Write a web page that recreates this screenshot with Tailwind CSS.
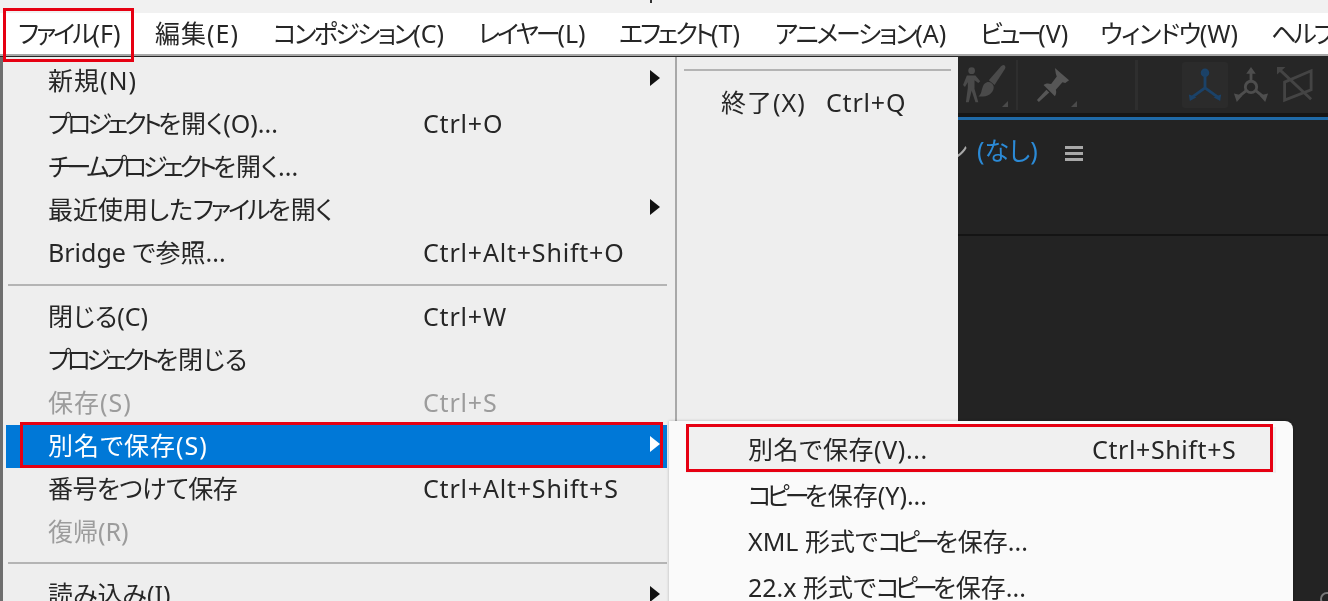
<!DOCTYPE html>
<html lang="ja">

<head>
    <meta charset="utf-8">
    <title>File menu</title>
    <script src="https://cdn.jsdelivr.net/npm/@tailwindcss/browser@4"></script>
</head>

<body class="bg-[#222222] overflow-hidden">
    <div class="relative w-[1328px] h-[601px] overflow-hidden flex flex-col font-['Noto_Sans','Noto_Sans_CJK_JP',sans-serif] [font-feature-settings:'palt'] text-[25px] leading-none text-[#262626] blur-[0.4px]">
        <!-- Top strip -->
        <div class="h-[13px] bg-[#f1f1f1]"></div>

        <!-- Menu bar -->
        <div class="h-[43px] bg-white border-b-2 border-[#a8a8a8] flex items-center pl-[18px] gap-[35px] whitespace-nowrap">
            <span class="w-[102px] shrink-0"><span class="tracking-[-3px]">ファイル</span>(F)</span>
            <span class="w-[83px] shrink-0 tracking-[1px]">編集(E)</span>
            <span class="w-[170px] shrink-0"><span class="tracking-[-2.6px]">コンポジション</span>(C)</span>
            <span class="w-[106px] shrink-0"><span class="tracking-[-3px]">レイヤー</span>(L)</span>
            <span class="w-[121px] shrink-0"><span class="tracking-[-3px]">エフェクト</span>(T)</span>
            <span class="w-[170px] shrink-0"><span class="tracking-[-2.2px]">アニメーション</span>(A)</span>
            <span class="w-[85px] shrink-0"><span class="tracking-[-3.5px]">ビュー</span>(V)</span>
            <span class="w-[136px] shrink-0"><span class="tracking-[-1.3px]">ウィンドウ</span>(W)</span>
            <span class="shrink-0"><span class="tracking-[-3px]">ヘルプ</span>(H)</span>
        </div>

        <!-- Dark app area -->
        <div class="flex-1 flex flex-col bg-[#232323]">
            <!-- Toolbar -->
            <div class="h-[57px] bg-[#262626] flex items-center pl-[962px]">
                <svg class="w-[46px] h-[42px]" viewBox="0 0 46 44" fill="#4a4a4a">
                    <circle cx="9" cy="7" r="3.5" />
                    <path d="M4 12h9l5 6-2 2-4-3v9l4 14h-3l-4-12-3 12H3l2-15v-6l-3 5-2-2z" />
                    <path d="M42 1c2 0 3 2 2 4L33 22l-6-5L40 2z" />
                    <path d="M25 19c3-1 6 1 7 4 1 5-4 11-11 11h-5c3-2 3-5 4-8 1-4 2-6 5-7z" />
                </svg>
                <svg class="ml-[-6px] w-[6px] h-[6px] self-end mb-[6px]" viewBox="0 0 6 6" fill="#4a4a4a"><path d="M6 0v6H0z" /></svg>
                <div class="ml-[8px] w-[2px] h-[50px] bg-[#2e2e2e]"></div>
                <svg class="ml-[18px] w-[34px] h-[36px]" viewBox="0 0 36 38" fill="#565656">
                    <path d="M20 1l15 13-4 3-3-1-7 8c1 3 0 5-1 7L8 19c3-2 5-2 8-1l6-8-1-3z" />
                    <path d="M11 24l3 3L3 37l-2-2z" />
                </svg>
                <svg class="ml-[1px] w-[6px] h-[6px] self-end mb-[6px]" viewBox="0 0 6 6" fill="#4a4a4a"><path d="M6 0v6H0z" /></svg>
                <div class="ml-[58px] w-[3px] h-[50px] bg-[#2e2e2e]"></div>
                <div class="ml-[44px] w-[46px] h-[46px] rounded-[3px] bg-[#2b2b2b] flex items-center justify-center">
                    <svg class="w-[36px] h-[36px]" viewBox="0 0 38 38" fill="none" stroke="#1b4268" stroke-width="3">
                        <path d="M19 6v16M19 22L5 32M19 22l14 10" />
                        <circle cx="19" cy="6" r="3" fill="#1b4268" />
                        <path d="M2 29l8 3-7 4zM36 29l-8 3 7 4z" fill="#1b4268" stroke="none" />
                    </svg>
                </div>
                <svg class="ml-[5px] w-[36px] h-[36px]" viewBox="0 0 38 38" fill="none" stroke="#4e4e4e" stroke-width="3">
                    <circle cx="19" cy="21" r="6" />
                    <path d="M19 15V5M14 25l-9 7M24 25l9 7" />
                    <path d="M19 0l5 7H14zM1 28l9 2-6 7zM37 28l-9 2 6 7z" fill="#4e4e4e" stroke="none" />
                </svg>
                <svg class="ml-[8px] w-[36px] h-[36px]" viewBox="0 0 38 38" fill="none" stroke="#444444" stroke-width="3">
                    <path d="M8 16l28-12v20L8 35zM3 3l33 31" />
                    <path d="M0 0h9L0 8z" fill="#444444" stroke="none" />
                </svg>
            </div>
            <div class="h-[4px] bg-[#161616]"></div>
            <div class="h-[3px] bg-[#1f6aa8]"></div>

            <!-- Panel header -->
            <div class="h-[116px] border-b-[2px] border-[#141414] bg-[#232323] pl-[945px] pt-[18px] flex items-start">
                <span class="w-[32px] text-[#a8a8a8]">ン</span>
                <span class="text-[#2b8ad6]">(なし)</span>
                <div class="ml-[27px] mt-[8px] w-[18px] h-[15px] flex flex-col justify-between">
                    <div class="h-[3px] bg-[#a8a8a8]"></div>
                    <div class="h-[3px] bg-[#a8a8a8]"></div>
                    <div class="h-[3px] bg-[#a8a8a8]"></div>
                </div>
            </div>
        </div>

        <!-- File menu, first column -->
        <div class="absolute left-0 top-[57px] w-[958px] h-[544px] flex bg-[#eeeeee] border-l-[3px] border-[#6e6e6e]">
            <div class="w-[672px] pt-[2px]">
                <div class="h-[43px] pl-[45px] flex items-center justify-between pr-[15px]"><span class="tracking-[1px]">新規(N)</span><span class="mb-[6px] w-0 h-0 border-y-[8px] border-y-transparent border-l-[10px] border-l-[#111111]"></span></div>
                <div class="h-[43px] pl-[45px] flex items-center"><span class="w-[375px]"><span class="tracking-[-4px]">プロジェクト</span>を開く(O)...</span><span class="tracking-[0.8px]">Ctrl+O</span></div>
                <div class="h-[43px] pl-[45px] flex items-center"><span><span class="tracking-[-4.2px]">チームプロジェクト</span>を開く...</span></div>
                <div class="h-[43px] pl-[45px] flex items-center justify-between pr-[15px]"><span>最近使用した<span class="tracking-[-3px]">ファイル</span>を開く</span><span class="mb-[6px] w-0 h-0 border-y-[8px] border-y-transparent border-l-[10px] border-l-[#111111]"></span></div>
                <div class="h-[43px] pl-[45px] flex items-center"><span class="w-[375px]">Bridge で参照...</span><span class="tracking-[0.8px]">Ctrl+Alt+Shift+O</span></div>
                <div class="h-[22px] flex items-center pl-[5px] pr-[8px]"><div class="w-full h-[2px] bg-[#b4b4b4]"></div></div>
                <div class="h-[43px] pb-[2px] pl-[45px] flex items-center"><span class="w-[375px]">閉じる(C)</span><span class="tracking-[0.8px]">Ctrl+W</span></div>
                <div class="h-[43px] pb-[2px] pl-[45px] flex items-center"><span><span class="tracking-[-4.5px]">プロジェクト</span>を閉じる</span></div>
                <div class="h-[43px] pb-[2px] pl-[45px] flex items-center text-[#9c9c9c]"><span class="w-[375px] tracking-[1px]">保存(S)</span><span class="tracking-[0.8px]">Ctrl+S</span></div>
                <div class="h-[43px] pb-[2px] ml-[3px] mr-[8px] pl-[42px] flex items-center justify-between pr-[7px] bg-[#0078d7] text-white"><span class="tracking-[1px]">別名で保存(S)</span><span class="mb-[4px] w-0 h-0 border-y-[8px] border-y-transparent border-l-[10px] border-l-white"></span></div>
                <div class="h-[43px] pb-[2px] pl-[45px] flex items-center"><span class="w-[375px] tracking-[-0.6px]">番号をつけて保存</span><span class="tracking-[0.8px]">Ctrl+Alt+Shift+S</span></div>
                <div class="h-[43px] pb-[2px] pl-[45px] flex items-center text-[#9c9c9c]"><span>復帰(R)</span></div>
                <div class="h-[20px] pb-[2px] flex items-center pl-[5px] pr-[8px]"><div class="w-full h-[2px] bg-[#b4b4b4]"></div></div>
                <div class="h-[43px] pb-[2px] pl-[45px] flex items-center justify-between pr-[15px]"><span>読み込み(I)</span><span class="mb-[2px] w-0 h-0 border-y-[8px] border-y-transparent border-l-[10px] border-l-[#111111]"></span></div>
            </div>

            <!-- Second column -->
            <div class="flex-1 border-l-2 border-[#a8a8a8] pt-[12px] px-[7px]">
                <div class="h-[2px] bg-[#b4b4b4]"></div>
                <div class="mt-[19px] pl-[37px] flex items-center h-[24px]"><span class="w-[105px] tracking-[1px]">終了(X)</span><span class="tracking-[0.8px]">Ctrl+Q</span></div>
            </div>
        </div>

        <!-- Save as submenu -->
        <div class="absolute left-[669px] top-[421px] w-[624px] h-[190px] bg-[#fafafa] rounded-tr-[8px] pt-[6px] px-[17px] shadow-[0_0_3px_rgba(0,0,0,0.25)]">
            <div class="h-[46px] pb-[2px] pl-[62px] flex items-center bg-[#f0f0f0]"><span class="w-[344px] tracking-[0.6px]">別名で保存(V)...</span><span class="tracking-[0.6px]">Ctrl+Shift+S</span></div>
            <div class="h-[46px] pb-[2px] pl-[62px] flex items-center"><span><span class="tracking-[-5px]">コピー</span>を保存(Y)...</span></div>
            <div class="h-[46px] pb-[2px] pl-[62px] flex items-center"><span>XML 形式で<span class="tracking-[-5px]">コピー</span>を保存...</span></div>
            <div class="h-[46px] pb-[2px] pl-[62px] flex items-center"><span>22.x 形式で<span class="tracking-[-5px]">コピー</span>を保存...</span></div>
        </div>

        <!-- Red annotation boxes -->
        <div class="absolute left-[3px] top-[8px] w-[131px] h-[54px] border-[3px] border-[#e60012]"></div>
        <div class="absolute left-[20px] top-[422px] w-[643px] h-[46px] border-[3px] border-[#e60012]"></div>
        <div class="absolute left-[686px] top-[424px] w-[587px] h-[48px] border-[3px] border-[#e60012]"></div>

        <!-- Small leftovers at the edges -->
        <div class="absolute left-[650px] top-0 w-[2px] h-[3px] bg-[#333333]"></div>
        <div class="absolute left-[1320px] top-[592px] w-[14px] h-[14px] rounded-full border-2 border-[#777777]"></div>
    </div>
</body>

</html>
